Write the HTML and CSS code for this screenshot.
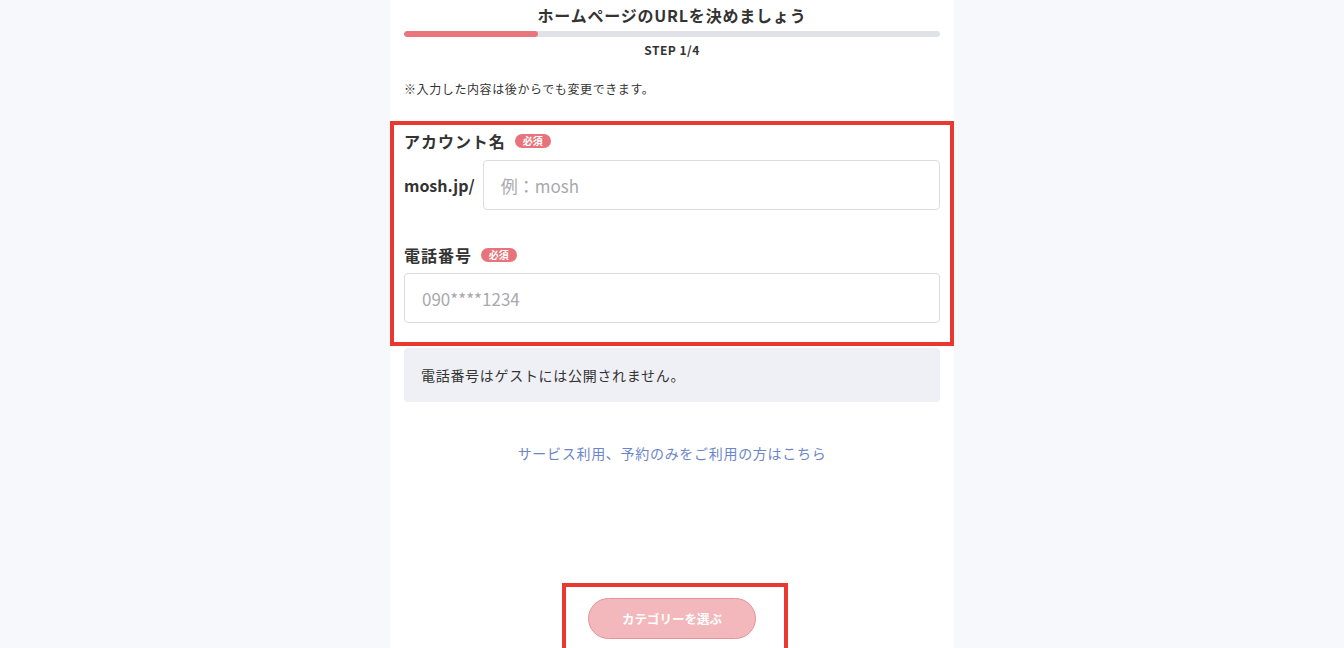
FILE: index.html
```html
<!DOCTYPE html>
<html lang="ja">
<head>
<meta charset="utf-8">
<link rel="stylesheet" href="styles.css">
</head>
<body>
<div class="page">
  <main class="column">
    <h1 class="title">ホームページのURLを決めましょう</h1>
    <div class="progress"><div class="progress-fill" style="width:25%"></div></div>
    <p class="step">STEP 1/4</p>
    <p class="note">※入力した内容は後からでも変更できます。</p>

    <section class="fields">
      <div class="label-row">
        <span class="label">アカウント名</span><span class="badge">必須</span>
      </div>
      <div class="url-row">
        <span class="prefix">mosh.jp/</span>
        <div class="input"><span class="placeholder">例：mosh</span></div>
      </div>

      <div class="label-row second">
        <span class="label">電話番号</span><span class="badge">必須</span>
      </div>
      <div class="input full"><span class="placeholder">090****1234</span></div>
    </section>

    <div class="info">電話番号はゲストには公開されません。</div>

    <a class="link">サービス利用、予約のみをご利用の方はこちら</a>

    <div class="btn-wrap">
      <div class="btn-box">
        <button class="btn">カテゴリーを選ぶ</button>
      </div>
    </div>
  </main>
</div>
</body>
</html>
```

FILE: styles.css
```css
* { box-sizing: border-box; }
html, body { margin: 0; padding: 0; }
body {
  background: #f7f8fc;
  font-family: "Noto Sans CJK JP", "Noto Sans", sans-serif;
  color: #333;
  height: 648px;
  overflow: hidden;
}
.page {
  display: flex;
  justify-content: center;
}
.column {
  width: 564px;
  min-height: 648px;
  background: #fff;
  padding: 3px 14px 0;
  display: flex;
  flex-direction: column;
}
.title {
  margin: 0;
  font-size: 16px;
  font-weight: 700;
  line-height: 24px;
  text-align: center;
  color: #333;
  letter-spacing: 0.05em;
}
.progress {
  margin-top: 4px;
  height: 6px;
  border-radius: 3px;
  background: #e1e2e8;
  overflow: hidden;
}
.progress-fill {
  height: 100%;
  background: #ea767d;
  border-radius: 3px;
}
.step {
  margin: 5px 0 0;
  font-size: 12px;
  font-weight: 700;
  line-height: 16px;
  text-align: center;
  letter-spacing: 0.04em;
}
.note {
  margin: 22px 0 0;
  font-size: 12px;
  line-height: 18px;
  letter-spacing: 0.05em;
}
.fields {
  margin: 23px -14px 0;
  border: 4px solid #e8382f;
  padding: 4px 10px 19px;
}
.label-row {
  display: flex;
  align-items: center;
  height: 24px;
  gap: 9px;
}
.label-row.second { margin-top: 33px; }
.label {
  font-size: 16px;
  font-weight: 700;
  line-height: 24px;
  letter-spacing: 0.06em;
}
.badge {
  background: #e8737a;
  color: #fff;
  font-size: 10px;
  font-weight: 700;
  line-height: 14px;
  height: 14px;
  padding: 0 8px;
  border-radius: 7px;
}
.url-row {
  display: flex;
  align-items: center;
  gap: 8px;
  margin-top: 7px;
}
.prefix {
  font-size: 16px;
  font-weight: 700;
  white-space: nowrap;
}
.input {
  flex: 1;
  height: 50px;
  border: 1px solid #dcdde3;
  border-radius: 4px;
  display: flex;
  align-items: center;
  padding: 0 17px;
  background: #fff;
}
.input.full { margin-top: 6px; }
.placeholder {
  font-size: 17px;
  color: #a9a9ad;
}
.info {
  margin-top: 2px;
  height: 54px;
  background: #eff0f5;
  border-radius: 4px;
  padding: 0 17px;
  display: flex;
  align-items: center;
  font-size: 14px;
  letter-spacing: 0.05em;
}
.link {
  margin-top: 39px;
  text-align: center;
  font-size: 14px;
  line-height: 24px;
  color: #6b86c8;
  letter-spacing: 0.05em;
}
.btn-wrap {
  display: flex;
  justify-content: center;
  margin-top: 118px;
}
.btn-box {
  border: 4px solid #e8382f;
  border-bottom: none;
  padding: 11px 28px 20px 22px;
  margin-left: 6px;
}
.btn {
  width: 168px;
  height: 41px;
  border-radius: 21px;
  border: 1px solid #eb9197;
  background: #f3b8bc;
  color: #fff;
  font-family: inherit;
  font-size: 12.5px;
  font-weight: 700;
  display: block;
}
```
